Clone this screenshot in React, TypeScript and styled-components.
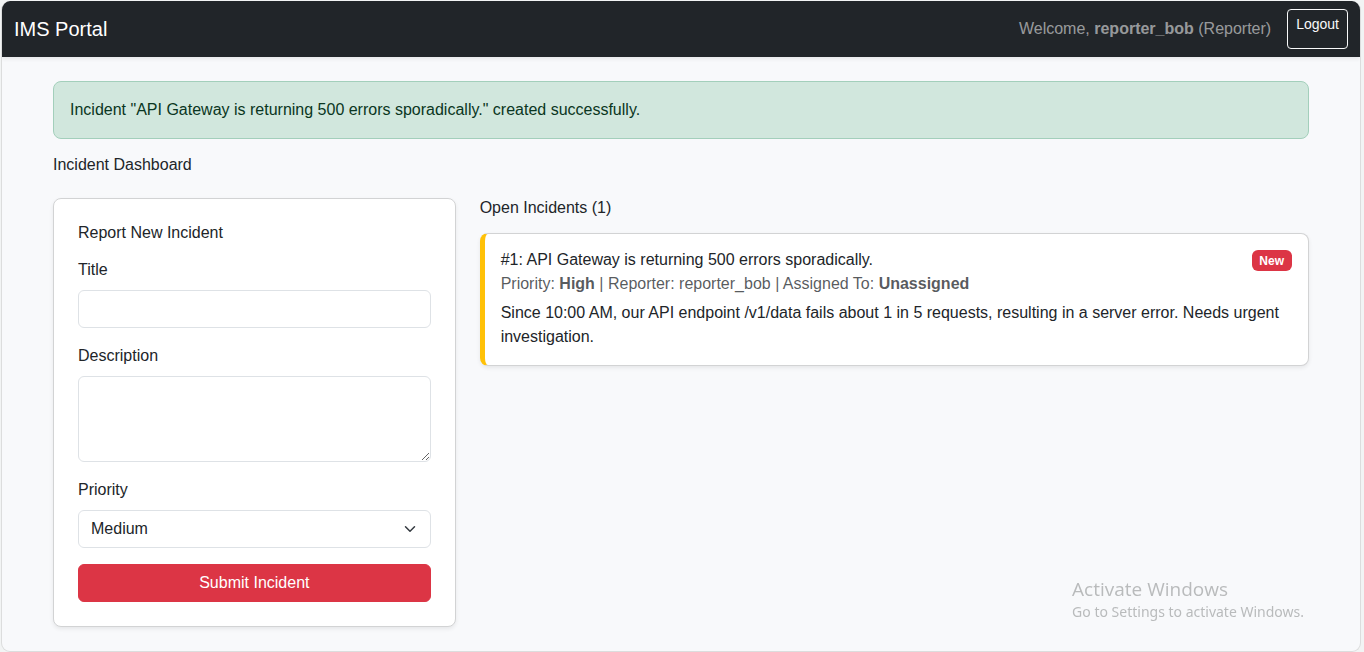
import React, { useState } from "react";
import styled, { createGlobalStyle } from "styled-components";

const GlobalStyle = createGlobalStyle`
  *, *::before, *::after { box-sizing: border-box; }
  body {
    margin: 0;
    background: #f2f4f4;
    color: #212529;
    font: 400 16px/24px "Liberation Sans", Arial, sans-serif;
  }
  h1, h2, h3, p { margin: 0; }
`;

const Frame = styled.div`
  display: flex;
  flex-direction: column;
  min-height: calc(100vh - 1px);
  margin: 1px 3px 0 1px;
  border: 1px solid #dcdddd;
  border-top: 0;
  border-radius: 9px;
  background: #f8f9fb;
  overflow: hidden;
`;

const Navbar = styled.nav`
  display: flex;
  align-items: center;
  justify-content: space-between;
  padding: 8px 12px;
  background: #212529;
  box-shadow: 0 2px 4px rgba(0, 0, 0, 0.075);
`;

const Brand = styled.a`
  color: #fff;
  font-size: 20px;
  line-height: 30px;
  text-decoration: none;
`;

const NavItems = styled.div`
  display: flex;
  gap: 16px;
`;

const Welcome = styled.span`
  padding: 8px 0;
  color: rgba(255, 255, 255, 0.55);
`;

const LogoutLink = styled.a`
  padding: 4px 8px;
  border: 1px solid #f8f9fa;
  border-radius: 4px;
  color: #f8f9fa;
  font-size: 14px;
  line-height: 21px;
  text-decoration: none;
`;

const Main = styled.main`
  width: 100%;
  max-width: 1280px;
  margin: 0 auto;
  padding: 24px 12px;
`;

const Alert = styled.div`
  margin-bottom: 16px;
  padding: 16px;
  border: 1px solid #a3cfbb;
  border-radius: 8px;
  background: #d1e7dd;
  color: #0a3622;
`;

const headingText = `
  font-size: 16px;
  font-weight: 400;
  line-height: 19px;
`;

const PageTitle = styled.h1`
  ${headingText}
  && { margin-bottom: 24px; }
`;

const SectionTitle = styled.h2`
  ${headingText}
  && { margin-bottom: 16px; }
`;

const Columns = styled.div`
  display: grid;
  grid-template-columns: repeat(12, minmax(0, 1fr));
  column-gap: 24px;
  align-items: start;
`;

const Column = styled.section<{ $span: number }>`
  grid-column: span ${(p) => p.$span};
`;

const Card = styled.div<{ $pad: number; $accent?: string }>`
  padding: ${(p) => p.$pad}px;
  border: 1px solid #d2d3d4;
  ${(p) => p.$accent && `border-left: 5px solid ${p.$accent};`}
  border-radius: 8px;
  background: #fff;
  box-shadow: 0 2px 4px rgba(0, 0, 0, 0.075);
`;

const Field = styled.div`
  margin-bottom: 16px;
`;

const Label = styled.label`
  display: block;
  margin-bottom: 8px;
`;

const controlStyle = `
  display: block;
  width: 100%;
  padding: 6px 12px;
  border: 1px solid #dee2e6;
  border-radius: 6px;
  background: #fff;
  color: #212529;
  font: inherit;
`;

const TextInput = styled.input`
  ${controlStyle}
  height: 38px;
`;

const TextArea = styled.textarea`
  ${controlStyle}
  resize: vertical;
`;

const SelectWrap = styled.div`
  display: grid;
  align-items: center;

  & > * { grid-area: 1 / 1; }
`;

const Select = styled.select`
  ${controlStyle}
  height: 38px;
  padding-right: 36px;
  appearance: none;
`;

const Chevron = styled.svg`
  justify-self: end;
  margin-right: 13px;
  pointer-events: none;
`;

const SubmitButton = styled.button`
  display: block;
  width: 100%;
  padding: 6px 12px;
  border: 1px solid #dc3545;
  border-radius: 6px;
  background: #dc3545;
  color: #fff;
  font: inherit;
  cursor: pointer;
`;

const IncidentHead = styled.div`
  display: flex;
  align-items: flex-start;
  justify-content: space-between;
  min-height: 22px;
`;

const IncidentTitle = styled.h3`
  ${headingText}
`;

const Badge = styled.span`
  padding: 5px 8px 4px 7px;
  border-radius: 6px;
  background: #dc3545;
  color: #fff;
  font-size: 12px;
  font-weight: 700;
  line-height: 12px;
`;

const Meta = styled.p`
  && { margin-bottom: 5px; }
  color: rgba(33, 37, 41, 0.75);
`;

const Watermark = styled.aside`
  position: fixed;
  right: 60px;
  bottom: 30px;
  color: #b9bbbc;
  font-family: "Noto Sans", "Open Sans", sans-serif;
  font-size: 14px;
  line-height: 20px;
  pointer-events: none;
`;

const WatermarkTitle = styled.div`
  font-family: "Open Sans", "Noto Sans", sans-serif;
  font-size: 19px;
  line-height: 26px;
`;

const priorities = ["Low", "Medium", "High", "Critical"];

const incidents = [
  {
    id: 1,
    title: "API Gateway is returning 500 errors sporadically.",
    priority: "High",
    reporter: "reporter_bob",
    assignee: "Unassigned",
    status: "New",
    description:
      "Since 10:00 AM, our API endpoint /v1/data fails about 1 in 5 requests, resulting in a server error. Needs urgent investigation.",
  },
];

export default function App() {
  const [priority, setPriority] = useState("Medium");

  return (
    <>
      <GlobalStyle />
      <Frame>
        <Navbar>
          <Brand href="#">IMS Portal</Brand>
          <NavItems>
            <Welcome>
              Welcome, <strong>reporter_bob</strong> (Reporter)
            </Welcome>
            <LogoutLink href="#logout">Logout</LogoutLink>
          </NavItems>
        </Navbar>
        <Main>
          <Alert role="alert">
            Incident "API Gateway is returning 500 errors sporadically." created successfully.
          </Alert>
          <PageTitle>Incident Dashboard</PageTitle>
          <Columns>
            <Column $span={4}>
              <Card $pad={24}>
                <SectionTitle>Report New Incident</SectionTitle>
                <form onSubmit={(e) => e.preventDefault()}>
                  <Field>
                    <Label htmlFor="title">Title</Label>
                    <TextInput id="title" type="text" />
                  </Field>
                  <Field>
                    <Label htmlFor="description">Description</Label>
                    <TextArea id="description" rows={3} />
                  </Field>
                  <Field>
                    <Label htmlFor="priority">Priority</Label>
                    <SelectWrap>
                      <Select
                        id="priority"
                        value={priority}
                        onChange={(e) => setPriority(e.target.value)}
                      >
                        {priorities.map((p) => (
                          <option key={p}>{p}</option>
                        ))}
                      </Select>
                      <Chevron width="16" height="12" viewBox="0 0 16 16" aria-hidden="true">
                        <path
                          d="m2 5 6 6 6-6"
                          fill="none"
                          stroke="#343a40"
                          strokeWidth="2"
                          strokeLinecap="round"
                          strokeLinejoin="round"
                        />
                      </Chevron>
                    </SelectWrap>
                  </Field>
                  <SubmitButton type="submit">Submit Incident</SubmitButton>
                </form>
              </Card>
            </Column>
            <Column $span={8}>
              <SectionTitle>Open Incidents ({incidents.length})</SectionTitle>
              {incidents.map((item) => (
                <Card key={item.id} $pad={16} $accent="#ffc107">
                  <IncidentHead>
                    <IncidentTitle>
                      #{item.id}: {item.title}
                    </IncidentTitle>
                    <Badge>{item.status}</Badge>
                  </IncidentHead>
                  <Meta>
                    Priority: <strong>{item.priority}</strong> | Reporter: {item.reporter} | Assigned
                    To: <strong>{item.assignee}</strong>
                  </Meta>
                  <p>{item.description}</p>
                </Card>
              ))}
            </Column>
          </Columns>
        </Main>
      </Frame>
      <Watermark>
        <WatermarkTitle>Activate Windows</WatermarkTitle>
        Go to Settings to activate Windows.
      </Watermark>
    </>
  );
}
